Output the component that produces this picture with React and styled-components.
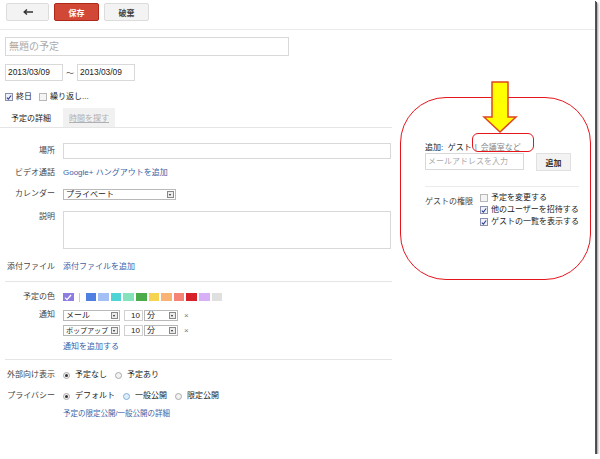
import styled, { createGlobalStyle } from "styled-components";

const GlobalStyle = createGlobalStyle`
  body {
    margin: 0;
    background: #fff;
    font-family: "Liberation Sans", "Noto Sans CJK JP", sans-serif;
    color: #222;
  }
`;

const COLORS = [
  "#4f7fe0",
  "#a3bff5",
  "#4fd4d6",
  "#84e3bd",
  "#4aab49",
  "#f6d350",
  "#f9b475",
  "#f58476",
  "#d6202a",
  "#d8b0f8",
  "#e0e0e0",
];

const Check = () => (
  <svg width="7" height="7" viewBox="0 0 7 7">
    <path d="M1 3.6 L2.8 5.4 L6 1.2" fill="none" stroke="#2b3a8a" strokeWidth="1.2" />
  </svg>
);

const App = () => {
  return (
    <>
      <GlobalStyle />
      <Frame>
        <TopBar>
          <Button $w={43}>
            <svg width="10" height="6" viewBox="0 0 10 6">
              <path d="M10 3 H2 M4 0.5 L1.2 3 L4 5.5" fill="none" stroke="#333" strokeWidth="1.4" />
            </svg>
          </Button>
          <Button $w={45} $red>保存</Button>
          <Button $w={45}>破棄</Button>
        </TopBar>

        <Body>
          <LeftCol>
            <Pad>
              <TitleInput>無題の予定</TitleInput>
              <DateRow>
                <DateBox>2013/03/09</DateBox>
                <Tilde>～</Tilde>
                <DateBox>2013/03/09</DateBox>
              </DateRow>
              <CheckRow>
                <CheckItem>
                  <Box $checked>
                    <Check />
                  </Box>
                  終日
                </CheckItem>
                <CheckItem>
                  <Box />
                  繰り返し...
                </CheckItem>
              </CheckRow>
            </Pad>

            <Tabs>
              <Tab $active>予定の詳細</Tab>
              <Tab>時間を探す</Tab>
            </Tabs>

            <FormRow $h={16} $mt={15}>
              <Label>場所</Label>
              <TextBox $w={328} />
            </FormRow>
            <FormRow $h={14} $mt={7}>
              <Label>ビデオ通話</Label>
              <Link>Google+ ハングアウトを追加</Link>
            </FormRow>
            <FormRow $h={12} $mt={8}>
              <Label>カレンダー</Label>
              <Select $w={113}>
                プライベート
                <Arrow />
              </Select>
            </FormRow>
            <FormRow $h={38} $mt={11} $top>
              <Label>説明</Label>
              <TextBox $w={328} $h={38} />
            </FormRow>
            <FormRow $h={12} $mt={12}>
              <Label>添付ファイル</Label>
              <Link>添付ファイルを追加</Link>
            </FormRow>

            <Divider $mt={8} />

            <FormRow $h={10} $mt={9}>
              <Label>予定の色</Label>
              <Swatches>
                <Swatch $color="#8c7de0">
                  <svg width="8" height="7" viewBox="0 0 8 7">
                    <path d="M1 3.6 L3 5.6 L7 1" fill="none" stroke="#fff" strokeWidth="1.3" />
                  </svg>
                </Swatch>
                <Sep />
                {COLORS.map((c) => (
                  <Swatch key={c} $color={c} />
                ))}
              </Swatches>
            </FormRow>
            <FormRow $h={11} $mt={8}>
              <Label>通知</Label>
              <Notice>
                <Select $w={57}>
                  メール
                  <Arrow />
                </Select>
                <NumBox>10</NumBox>
                <Select $w={34}>
                  分
                  <Arrow />
                </Select>
                <Remove>×</Remove>
              </Notice>
            </FormRow>
            <FormRow $h={11} $mt={5}>
              <span />
              <Notice>
                <Select $w={57} $tight>
                  ポップアップ
                  <Arrow />
                </Select>
                <NumBox>10</NumBox>
                <Select $w={34}>
                  分
                  <Arrow />
                </Select>
                <Remove>×</Remove>
              </Notice>
            </FormRow>
            <FormRow $h={10} $mt={5}>
              <span />
              <Link>通知を追加する</Link>
            </FormRow>

            <Divider $mt={8} />

            <FormRow $h={12} $mt={9}>
              <Label>外部向け表示</Label>
              <Radios>
                <RadioItem>
                  <Radio $checked />
                  予定なし
                </RadioItem>
                <RadioItem>
                  <Radio />
                  予定あり
                </RadioItem>
              </Radios>
            </FormRow>
            <FormRow $h={12} $mt={9}>
              <Label>プライバシー</Label>
              <Radios>
                <RadioItem>
                  <Radio $checked />
                  デフォルト
                </RadioItem>
                <RadioItem>
                  <Radio $blue />
                  一般公開
                </RadioItem>
                <RadioItem>
                  <Radio />
                  限定公開
                </RadioItem>
              </Radios>
            </FormRow>
            <FormRow $h={10} $mt={6}>
              <span />
              <Link $small>予定の限定公開/一般公開の詳細</Link>
            </FormRow>
          </LeftCol>

          <RightCol>
            <AddLine>
              追加:&nbsp;&nbsp;ゲスト
              <Bar>|</Bar>
              <RoomLink>会議室など</RoomLink>
            </AddLine>
            <GuestRow>
              <EmailBox>メールアドレスを入力</EmailBox>
              <AddButton>追加</AddButton>
            </GuestRow>
            <RightDivider />
            <Perms>
              <PermLabel>ゲストの権限</PermLabel>
              <PermList>
                <CheckItem>
                  <Box />
                  予定を変更する
                </CheckItem>
                <CheckItem>
                  <Box $checked>
                    <Check />
                  </Box>
                  他のユーザーを招待する
                </CheckItem>
                <CheckItem>
                  <Box $checked>
                    <Check />
                  </Box>
                  ゲストの一覧を表示する
                </CheckItem>
              </PermList>
            </Perms>
          </RightCol>
        </Body>

        {/* annotations drawn over the screenshot */}
        <Circle />
        <SmallMark />
        <ArrowMark width="38" height="54" viewBox="0 0 38 54">
          <polygon
            points="12,2 28,2 28,37 36,37 20,52 4,37 12,37"
            fill="#ffff00"
            stroke="#e0441c"
            strokeWidth="1.5"
            strokeLinejoin="miter"
          />
        </ArrowMark>
      </Frame>
    </>
  );
};

const Frame = styled.div`
  position: relative;
  width: 595px;
  height: 454px;
  background: #fff;
  box-shadow: 1px 1px 0 #555, 2px 2px 0 #4a4a4a, 3px 3px 2px #999;
  overflow: visible;
`;

const TopBar = styled.div`
  display: flex;
  align-items: flex-start;
  gap: 5px;
  box-sizing: border-box;
  height: 30px;
  padding: 3px 0 0 6px;
  border-bottom: 1px solid #ebebeb;
`;

const Button = styled.div`
  display: flex;
  align-items: center;
  justify-content: center;
  box-sizing: border-box;
  width: ${(p) => p.$w}px;
  height: 18px;
  border: 1px solid ${(p) => (p.$red ? "#b0281a" : "#dcdcdc")};
  border-radius: 2px;
  background: ${(p) => (p.$red ? "#d14836" : "#f3f3f3")};
  color: ${(p) => (p.$red ? "#fff" : "#444")};
  font-size: 8px;
  font-weight: bold;
`;

const Body = styled.div`
  display: flex;
`;

const LeftCol = styled.div`
  width: 392px;
  flex-shrink: 0;
`;

const Pad = styled.div`
  padding-left: 5px;
`;

const TitleInput = styled.div`
  box-sizing: border-box;
  width: 284px;
  height: 19px;
  margin-top: 7px;
  padding-left: 3px;
  border: 1px solid #d9d9d9;
  color: #aaa;
  font-size: 10px;
  line-height: 17px;
`;

const DateRow = styled.div`
  display: flex;
  align-items: center;
  margin-top: 8px;
`;

const DateBox = styled.div`
  box-sizing: border-box;
  width: 58px;
  height: 17px;
  padding-left: 2px;
  border: 1px solid #d9d9d9;
  font-size: 8.4px;
  line-height: 15px;
`;

const Tilde = styled.span`
  width: 14px;
  text-align: center;
  color: #555;
  font-size: 8px;
`;

const CheckRow = styled.div`
  display: flex;
  gap: 7px;
  margin-top: 10px;
  height: 12px;
  align-items: center;
`;

const CheckItem = styled.div`
  display: flex;
  align-items: center;
  gap: 3px;
  height: 12px;
  font-size: 8px;
  line-height: 12px;
  color: #222;
`;

const Box = styled.span`
  display: flex;
  align-items: center;
  justify-content: center;
  box-sizing: border-box;
  width: 8px;
  height: 8px;
  border: 1px solid ${(p) => (p.$checked ? "#8a8fb0" : "#b8b8b8")};
  background: ${(p) => (p.$checked ? "#eef0fa" : "#f4f4f4")};
`;

const Tabs = styled.div`
  display: flex;
  gap: 6px;
  margin-top: 5px;
  padding-left: 5px;
  border-bottom: 1px solid #e5e5e5;
  height: 19px;
`;

const Tab = styled.div`
  width: 52px;
  display: flex;
  align-items: center;
  justify-content: center;
  font-size: 8px;
  color: ${(p) => (p.$active ? "#222" : "#b0b0b0")};
  background: ${(p) => (p.$active ? "#fff" : "#f1f1f1")};
  text-decoration: ${(p) => (p.$active ? "none" : "underline")};
`;

const FormRow = styled.div`
  display: grid;
  grid-template-columns: 55px 1fr;
  column-gap: 8px;
  align-items: ${(p) => (p.$top ? "start" : "center")};
  height: ${(p) => p.$h}px;
  margin-top: ${(p) => p.$mt}px;
`;

const Label = styled.div`
  text-align: right;
  font-size: 8px;
  line-height: 12px;
  color: #444;
  white-space: nowrap;
`;

const TextBox = styled.div`
  box-sizing: border-box;
  width: ${(p) => p.$w}px;
  height: ${(p) => p.$h || 16}px;
  border: 1px solid #d9d9d9;
`;

const Link = styled.span`
  color: #3a63a8;
  font-size: ${(p) => (p.$small ? "7.5px" : "8px")};
  line-height: 12px;
  white-space: nowrap;
`;

const Select = styled.div`
  display: flex;
  align-items: center;
  justify-content: space-between;
  box-sizing: border-box;
  width: ${(p) => p.$w}px;
  height: 11px;
  padding-left: 2px;
  border: 1px solid #b9b9b9;
  font-size: ${(p) => (p.$tight ? "7.2px" : "8px")};
  letter-spacing: ${(p) => (p.$tight ? "-0.2px" : "0")};
  line-height: 9px;
  white-space: nowrap;
  overflow: hidden;
`;

const Arrow = styled.span`
  position: relative;
  flex-shrink: 0;
  box-sizing: border-box;
  width: 7px;
  height: 7px;
  margin: 0 1px 0 1px;
  border: 1px solid #888;
  background: #ececec;

  &::after {
    content: "";
    position: absolute;
    left: 1px;
    top: 2px;
    border-left: 1.5px solid transparent;
    border-right: 1.5px solid transparent;
    border-top: 2px solid #222;
  }
`;

const Swatches = styled.div`
  display: flex;
  align-items: center;
  gap: 2px;
`;

const Swatch = styled.span`
  display: flex;
  align-items: center;
  justify-content: center;
  width: 10.6px;
  height: 8px;
  background: ${(p) => p.$color};
`;

const Sep = styled.span`
  width: 1px;
  height: 9px;
  margin: 0 4px 0 3px;
  background: #ccc;
`;

const Notice = styled.div`
  display: flex;
  align-items: center;
  gap: 1px;
`;

const NumBox = styled.div`
  box-sizing: border-box;
  width: 19px;
  height: 11px;
  margin-left: 3px;
  padding-right: 2px;
  border: 1px solid #d0d0d0;
  text-align: right;
  font-size: 8px;
  line-height: 9px;
`;

const Remove = styled.span`
  margin-left: 5px;
  color: #777;
  font-size: 8px;
`;

const Divider = styled.div`
  height: 1px;
  margin-top: ${(p) => p.$mt}px;
  margin-left: 5px;
  background: #e5e5e5;
`;

const Radios = styled.div`
  display: flex;
  gap: 8px;
`;

const RadioItem = styled.div`
  display: flex;
  align-items: center;
  gap: 5px;
  font-size: 8px;
  line-height: 12px;
  color: #222;
`;

const Radio = styled.span`
  display: flex;
  align-items: center;
  justify-content: center;
  box-sizing: border-box;
  width: 7px;
  height: 7px;
  border-radius: 50%;
  border: 1px solid ${(p) => (p.$blue ? "#7fb0d8" : "#aaa")};
  background: ${(p) => (p.$blue ? "#dfeefa" : "#f2f2f2")};

  &::after {
    content: "";
    display: ${(p) => (p.$checked ? "block" : "none")};
    width: 3px;
    height: 3px;
    border-radius: 50%;
    background: #333;
  }
`;

const RightCol = styled.div`
  padding: 110px 0 0 33px;
  width: 154px;
`;

const AddLine = styled.div`
  display: flex;
  align-items: center;
  height: 12px;
  font-size: 8px;
  color: #222;
  white-space: nowrap;
`;

const Bar = styled.span`
  margin: 0 4px 0 3px;
  color: #666;
`;

const RoomLink = styled.span`
  color: #888;
  text-decoration: underline;
`;

const GuestRow = styled.div`
  display: flex;
  gap: 12px;
  margin-top: 1px;
`;

const EmailBox = styled.div`
  box-sizing: border-box;
  width: 99px;
  height: 17px;
  padding-left: 2px;
  border: 1px solid #d9d9d9;
  color: #aaa;
  font-size: 8px;
  line-height: 15px;
`;

const AddButton = styled.div`
  display: flex;
  align-items: center;
  justify-content: center;
  box-sizing: border-box;
  width: 35px;
  height: 18px;
  border: 1px solid #e0e0e0;
  background: #f3f3f3;
  font-size: 8px;
  font-weight: bold;
  color: #333;
`;

const RightDivider = styled.div`
  height: 1px;
  margin-top: 15px;
  background: #ebebeb;
`;

const Perms = styled.div`
  display: flex;
  margin-top: 5px;
`;

const PermLabel = styled.div`
  width: 55px;
  padding-top: 4px;
  font-size: 8px;
  line-height: 12px;
  color: #444;
  white-space: nowrap;
`;

const PermList = styled.div`
  display: flex;
  flex-direction: column;
  white-space: nowrap;
`;

const Circle = styled.div`
  position: absolute;
  left: 400px;
  top: 97px;
  width: 191px;
  height: 183px;
  box-sizing: border-box;
  border: 1.5px solid #e4161c;
  border-radius: 46px;
`;

const SmallMark = styled.div`
  position: absolute;
  left: 472px;
  top: 133px;
  width: 62px;
  height: 19px;
  box-sizing: border-box;
  border: 1.5px solid #e4161c;
  border-radius: 6px;
`;

const ArrowMark = styled.svg`
  position: absolute;
  left: 480px;
  top: 80px;
`;

export default App;
